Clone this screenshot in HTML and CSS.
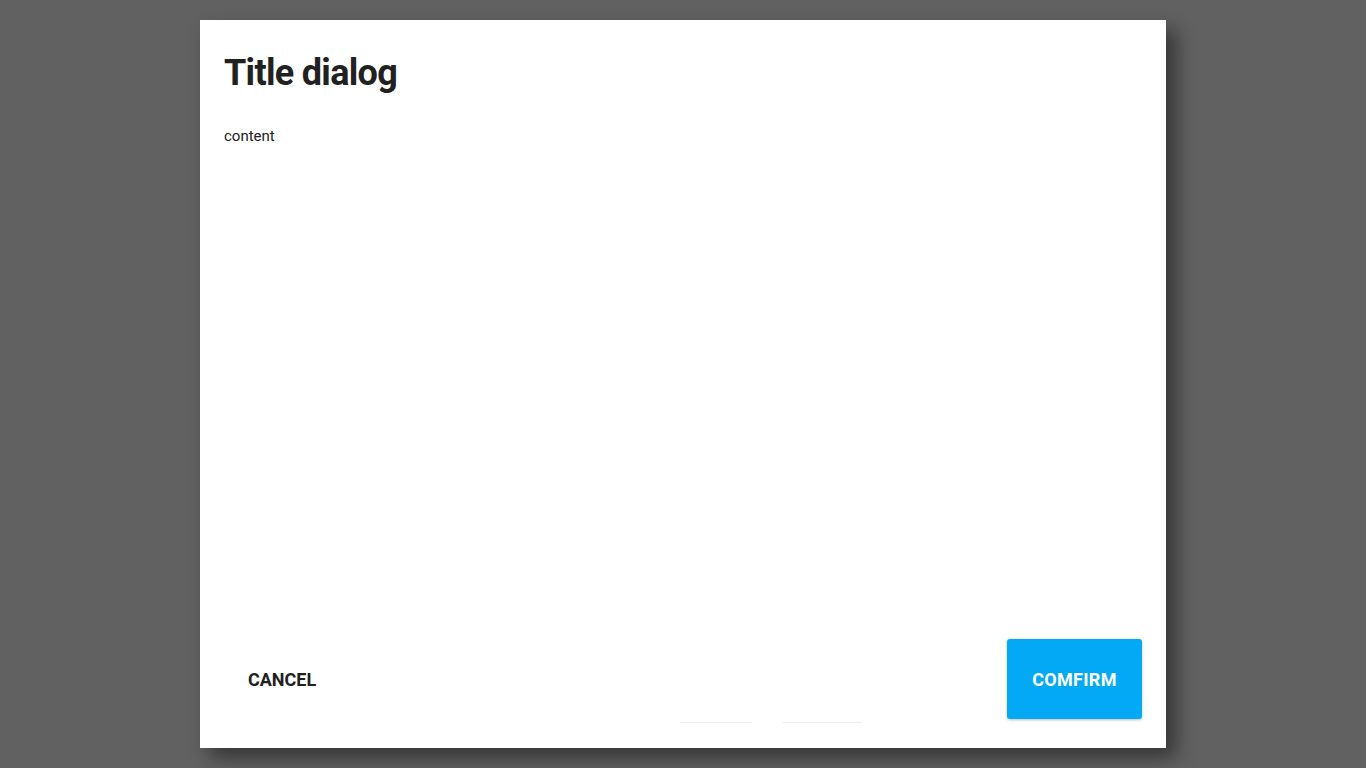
FILE: index.html
```html
<!DOCTYPE html>
<html>
<head>
<meta charset="utf-8">
<link rel="stylesheet" href="styles.css">
</head>
<body>
<div class="overlay">
  <div class="dialog">
    <h1 class="title">Title dialog</h1>
    <div class="content">content</div>
    <div class="actions">
      <button class="btn btn-flat">CANCEL</button>
      <div class="ghosts">
        <span class="ghost g1"></span>
        <span class="ghost g2"></span>
      </div>
      <button class="btn btn-primary">COMFIRM</button>
    </div>
  </div>
</div>
</body>
</html>
```
FILE: styles.css
```css
html, body {
  margin: 0;
  padding: 0;
  height: 100%;
}
body {
  background: #616161;
  font-family: "Roboto", "Open Sans", sans-serif;
  overflow: hidden;
}
.overlay {
  height: 100%;
  display: flex;
  justify-content: center;
  padding-top: 20px;
  box-sizing: border-box;
}
.dialog {
  width: 966px;
  height: 728px;
  background: #fff;
  box-shadow: 10px 10px 18px rgba(0,0,0,0.45);
  display: flex;
  flex-direction: column;
  padding: 0 24px 29px 24px;
  box-sizing: border-box;
}
.title {
  margin: 0;
  padding-top: 30px;
  font-size: 36px;
  line-height: 46px;
  font-weight: 700;
  color: #212121;
  letter-spacing: -0.7px;
}
.content {
  margin-top: 30px;
  font-size: 15px;
  line-height: 20px;
  color: #212121;
  flex: 1;
}
.actions {
  display: flex;
  align-items: flex-end;
  justify-content: space-between;
  position: relative;
}
.btn {
  height: 80px;
  border: none;
  font-family: inherit;
  font-size: 18px;
  font-weight: 700;
  cursor: pointer;
  padding: 0 24px;
}
.btn-flat {
  background: transparent;
  color: #212121;
}
.btn-primary {
  width: 135px;
  background: #03a9f4;
  color: #fff;
  border-radius: 3px;
  box-shadow: 0 1px 3px rgba(0,0,0,0.25);
  letter-spacing: 0.3px;
  padding: 0;
}
.ghosts {
  position: absolute;
  left: 456px;
  bottom: -4px;
  display: flex;
  gap: 31px;
}
.ghost {
  display: block;
  height: 1px;
  background: #eeeeee;
  box-shadow: 0 0 1px rgba(0,0,0,0.06);
}
.g1 { width: 72px; }
.g2 { width: 78px; }
```
